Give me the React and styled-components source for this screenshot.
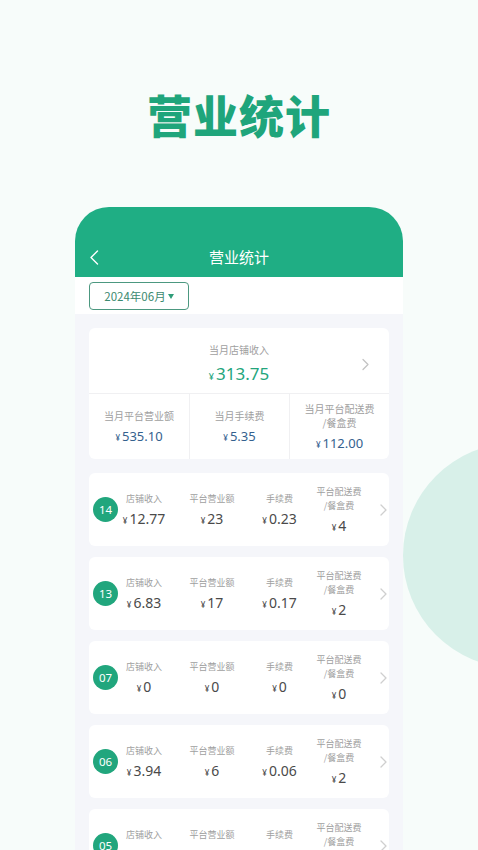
import React from "react";
import styled, { createGlobalStyle } from "styled-components";

const GlobalStyle = createGlobalStyle`
  html, body {
    margin: 0;
    padding: 0;
    background: #f7fcfa;
  }
  body {
    font-family: "Noto Sans CJK SC", "Noto Sans", sans-serif;
    overflow: hidden;
  }
`;

const Page = styled.div`
  position: relative;
  width: 478px;
  height: 850px;
  overflow: hidden;
  background: #f7fcfa;
`;

const Blob = styled.div`
  position: absolute;
  left: 403px;
  top: 443px;
  width: 225px;
  height: 225px;
  border-radius: 50%;
  background: #d8f0e9;
`;

const BigTitle = styled.h1`
  margin: 0;
  padding-top: 92px;
  height: 115px;
  box-sizing: border-box;
  text-align: center;
  font-size: 45px;
  line-height: 46px;
  font-weight: 900;
  color: #1fa57b;
  letter-spacing: 1px;
`;

const Phone = styled.div`
  position: relative;
  width: 328px;
  margin: 92px auto 0;
  height: 643px;
  border-radius: 34px 34px 0 0;
  overflow: hidden;
  background: #f5f6fa;
`;

const Header = styled.div`
  height: 70px;
  background: #1fae84;
  box-sizing: border-box;
  padding-top: 30px;
  display: grid;
  grid-template-columns: 40px 1fr 40px;
  align-items: center;
`;

const HeaderTitle = styled.div`
  text-align: center;
  color: #fff;
  font-size: 15px;
  line-height: 20px;
`;

const BackBtn = styled.div`
  display: flex;
  align-items: center;
  padding-left: 14px;
  height: 20px;
`;

const FilterBar = styled.div`
  background: #fff;
  height: 37px;
  padding: 5px 14px 0;
  box-sizing: border-box;
`;

const DateButton = styled.div`
  display: inline-flex;
  align-items: center;
  justify-content: center;
  gap: 2px;
  width: 100px;
  height: 28px;
  box-sizing: border-box;
  border: 1px solid #4c9880;
  border-radius: 4px;
  color: #3c8a70;
  font-size: 11.5px;
`;

const Caret = styled.span`
  width: 0;
  height: 0;
  border-left: 3.5px solid transparent;
  border-right: 3.5px solid transparent;
  border-top: 5px solid #2f9d79;
  margin-top: 1px;
`;

const Content = styled.div`
  padding: 14px 14px 0;
  display: flex;
  flex-direction: column;
  gap: 11px;
`;

const Card = styled.div`
  background: #fff;
  border-radius: 6px;
  flex-shrink: 0;
`;

const SummaryCard = styled(Card)`
  margin-bottom: 3px;
`;

const SummaryTop = styled.div`
  display: grid;
  grid-template-columns: 1fr auto 1fr;
  align-items: center;
  height: 66px;
  box-sizing: border-box;
  padding: 15px 20px 9px;
  border-bottom: 1px solid #f0f0f2;
`;

const Stack = styled.div`
  display: flex;
  flex-direction: column;
  align-items: center;
  gap: ${(p) => p.gap || 4}px;
`;

const Label = styled.div`
  font-size: ${(p) => p.size || 9}px;
  line-height: ${(p) => p.lh || 14}px;
  color: #a0a0a0;
  text-align: center;
  white-space: nowrap;
`;

const Money = styled.div`
  font-size: ${(p) => p.size}px;
  line-height: ${(p) => p.lh}px;
  height: ${(p) => p.lh}px;
  color: ${(p) => p.color};
  white-space: nowrap;
  font-family: "Noto Sans", sans-serif;
`;

const Yen = styled.span`
  font-size: ${(p) => p.size || 8}px;
  line-height: 1;
  margin-right: 2px;
`;

const SummaryBottom = styled.div`
  display: grid;
  grid-template-columns: 1fr 1fr 1fr;
  height: 65px;
`;

const SummaryCell = styled.div`
  display: flex;
  align-items: center;
  justify-content: center;
  border-left: ${(p) => (p.first ? "none" : "1px solid #f0f0f2")};
`;

const ChevronWrap = styled.div`
  display: flex;
  justify-content: flex-end;
  align-items: center;
`;

const Row = styled(Card)`
  height: 73px;
  display: grid;
  grid-template-columns: 25px 52px 84px 51px 68px 14px;
  align-items: center;
  padding: 0 6px 0 4px;
`;

const Badge = styled.div`
  width: 25px;
  height: 25px;
  border-radius: 50%;
  background: #21a67d;
  color: #fff;
  font-size: 11.5px;
  display: flex;
  align-items: center;
  justify-content: center;
  font-family: "Noto Sans", sans-serif;
`;

const Chevron = ({ color = "#cfcfcf", w = 7, h = 12 }) => (
  <svg width={w} height={h} viewBox="0 0 7 12" fill="none">
    <path d="M1 1l5 5-5 5" stroke={color} strokeWidth="1.3" strokeLinecap="round" strokeLinejoin="round" />
  </svg>
);

const rows = [
  { day: "14", a: "12.77", b: "23", c: "0.23", d: "4" },
  { day: "13", a: "6.83", b: "17", c: "0.17", d: "2" },
  { day: "07", a: "0", b: "0", c: "0", d: "0" },
  { day: "06", a: "3.94", b: "6", c: "0.06", d: "2" },
  { day: "05", a: "190.44", b: "717.9", c: "7.16", d: "12" },
];

function Cell({ label, value }) {
  return (
    <Stack>
      <Label>{label}</Label>
      <Money size={14} lh={18} color="#4a4a4a">
        <Yen>¥</Yen>
        {value}
      </Money>
    </Stack>
  );
}

export default function App() {
  return (
    <Page>
      <GlobalStyle />
      <Blob />
      <BigTitle>营业统计</BigTitle>
      <Phone>
        <Header>
          <BackBtn>
            <svg width="10" height="15" viewBox="0 0 10 15" fill="none">
              <path d="M8.5 1L2 7.5 8.5 14" stroke="#fff" strokeWidth="1.4" strokeLinecap="round" strokeLinejoin="round" />
            </svg>
          </BackBtn>
          <HeaderTitle>营业统计</HeaderTitle>
          <div />
        </Header>
        <FilterBar>
          <DateButton>
            2024年06月
            <Caret />
          </DateButton>
        </FilterBar>
        <Content>
          <SummaryCard>
            <SummaryTop>
              <div />
              <Stack gap={6}>
                <Label size={10}>当月店铺收入</Label>
                <Money size={17} lh={22} color="#23a57c">
                  <Yen size={9}>¥</Yen>
                  313.75
                </Money>
              </Stack>
              <ChevronWrap>
                <Chevron color="#c4c4c4" w={7} h={13} />
              </ChevronWrap>
            </SummaryTop>
            <SummaryBottom>
              <SummaryCell first>
                <Stack>
                  <Label size={10}>当月平台营业额</Label>
                  <Money size={13} lh={18} color="#34618e">
                    <Yen>¥</Yen>535.10
                  </Money>
                </Stack>
              </SummaryCell>
              <SummaryCell>
                <Stack>
                  <Label size={10}>当月手续费</Label>
                  <Money size={13} lh={18} color="#34618e">
                    <Yen>¥</Yen>5.35
                  </Money>
                </Stack>
              </SummaryCell>
              <SummaryCell>
                <Stack>
                  <Label size={10}>
                    当月平台配送费
                    <br />
                    /餐盒费
                  </Label>
                  <Money size={13} lh={18} color="#34618e">
                    <Yen>¥</Yen>112.00
                  </Money>
                </Stack>
              </SummaryCell>
            </SummaryBottom>
          </SummaryCard>
          {rows.map((r) => (
            <Row key={r.day}>
              <Badge>{r.day}</Badge>
              <Cell label="店铺收入" value={r.a} />
              <Cell label="平台营业额" value={r.b} />
              <Cell label="手续费" value={r.c} />
              <Stack>
                <Label>
                  平台配送费
                  <br />
                  /餐盒费
                </Label>
                <Money size={14} lh={18} color="#4a4a4a">
                  <Yen>¥</Yen>
                  {r.d}
                </Money>
              </Stack>
              <ChevronWrap>
                <Chevron />
              </ChevronWrap>
            </Row>
          ))}
        </Content>
      </Phone>
    </Page>
  );
}
